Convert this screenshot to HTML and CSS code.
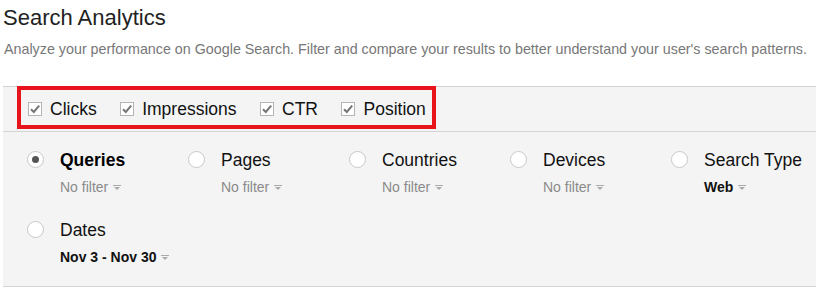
FILE: index.html
```html
<!DOCTYPE html>
<html lang="en">
<head>
<meta charset="UTF-8">
<meta name="viewport" content="width=device-width, initial-scale=1.0">
<title>Search Analytics</title>
<link rel="stylesheet" href="styles.css">
</head>
<body>
<div class="page">
    <h1 class="title">Search Analytics</h1>
    <p class="intro">Analyze your performance on Google Search. Filter and compare your results to better understand your user's search patterns.</p>

    <div class="panel">
        <div class="metrics">
            <label class="metric"><span class="check"><svg width="14" height="14" viewBox="0 0 14 14"><rect x="0.5" y="0.5" width="13" height="13" fill="#fff" stroke="#b5b5b5"/><path d="M3 7.2 L5.8 10 L11.2 3.6" fill="none" stroke="#757575" stroke-width="2"/></svg></span>Clicks</label>
            <label class="metric"><span class="check"><svg width="14" height="14" viewBox="0 0 14 14"><rect x="0.5" y="0.5" width="13" height="13" fill="#fff" stroke="#b5b5b5"/><path d="M3 7.2 L5.8 10 L11.2 3.6" fill="none" stroke="#757575" stroke-width="2"/></svg></span>Impressions</label>
            <label class="metric"><span class="check"><svg width="14" height="14" viewBox="0 0 14 14"><rect x="0.5" y="0.5" width="13" height="13" fill="#fff" stroke="#b5b5b5"/><path d="M3 7.2 L5.8 10 L11.2 3.6" fill="none" stroke="#757575" stroke-width="2"/></svg></span>CTR</label>
            <label class="metric"><span class="check"><svg width="14" height="14" viewBox="0 0 14 14"><rect x="0.5" y="0.5" width="13" height="13" fill="#fff" stroke="#b5b5b5"/><path d="M3 7.2 L5.8 10 L11.2 3.6" fill="none" stroke="#757575" stroke-width="2"/></svg></span>Position</label>
            <div class="highlight"></div>
        </div>

        <div class="filters">
            <div class="filter">
                <span class="radio checked"></span>
                <div class="filter-text">
                    <div class="filter-name bold">Queries</div>
                    <div class="filter-value">No filter <span class="caret"></span></div>
                </div>
            </div>
            <div class="filter">
                <span class="radio"></span>
                <div class="filter-text">
                    <div class="filter-name">Pages</div>
                    <div class="filter-value">No filter <span class="caret"></span></div>
                </div>
            </div>
            <div class="filter">
                <span class="radio"></span>
                <div class="filter-text">
                    <div class="filter-name">Countries</div>
                    <div class="filter-value">No filter <span class="caret"></span></div>
                </div>
            </div>
            <div class="filter">
                <span class="radio"></span>
                <div class="filter-text">
                    <div class="filter-name">Devices</div>
                    <div class="filter-value">No filter <span class="caret"></span></div>
                </div>
            </div>
            <div class="filter">
                <span class="radio"></span>
                <div class="filter-text">
                    <div class="filter-name">Search Type</div>
                    <div class="filter-value set">Web <span class="caret"></span></div>
                </div>
            </div>
            <div class="filter">
                <span class="radio"></span>
                <div class="filter-text">
                    <div class="filter-name">Dates</div>
                    <div class="filter-value set">Nov 3 - Nov 30 <span class="caret"></span></div>
                </div>
            </div>
        </div>
    </div>
</div>
</body>
</html>
```

FILE: styles.css
```css
body, html {
    margin: 0;
    padding: 0;
    height: 100%;
    overflow: hidden;
    background: #fff;
}

body {
    font-family: 'Liberation Sans', Arial, sans-serif;
    color: #222;
}

.page {
    padding-left: 3px;
}

.title {
    margin: 0;
    padding-top: 5px;
    font-size: 22px;
    font-weight: normal;
    line-height: 26px;
    color: #222;
}

.intro {
    margin: 9px 0 0 1px;
    font-size: 14.3px;
    line-height: 18px;
    color: #777;
    white-space: nowrap;
}

.panel {
    margin-top: 28px;
    background: #f4f4f4;
    border-top: 1px solid #d4d4d4;
    border-bottom: 1px solid #d4d4d4;
}

.metrics {
    position: relative;
    display: flex;
    align-items: center;
    gap: 23.5px;
    height: 44px;
    padding-left: 25px;
    border-bottom: 1px solid #d4d4d4;
}

.metric {
    display: flex;
    align-items: center;
    gap: 8px;
    font-size: 17.5px;
    color: #111;
}

.check {
    display: flex;
}

.highlight {
    position: absolute;
    left: 14px;
    top: -1px;
    width: 411px;
    height: 35px;
    border: 4px solid #e8141c;
    pointer-events: none;
}

.filters {
    display: grid;
    grid-template-columns: repeat(5, 161px);
    row-gap: 25px;
    padding: 18px 0 21px 24px;
}

.filter {
    display: flex;
    gap: 16px;
}

.radio {
    flex: none;
    position: relative;
    width: 15px;
    height: 15px;
    margin-top: 1px;
    border: 1px solid #c8c8c8;
    border-radius: 50%;
    background: #fff;
}

.radio.checked::after {
    content: "";
    position: absolute;
    left: 4px;
    top: 4px;
    width: 7px;
    height: 7px;
    border-radius: 50%;
    background: #555;
}

.filter-name {
    font-size: 17.5px;
    line-height: 20px;
    color: #111;
    white-space: nowrap;
}

.filter-name.bold {
    font-weight: bold;
    color: #000;
}

.filter-value {
    margin-top: 9px;
    font-size: 14px;
    line-height: 16px;
    color: #8a8a8a;
    white-space: nowrap;
}

.filter-value.set {
    font-weight: bold;
    color: #111;
}

.caret {
    display: inline-block;
    position: relative;
    width: 8px;
    height: 4px;
    margin-left: 1px;
    vertical-align: 2px;
    border-top: 1px solid #aaa;
}

.caret::after {
    content: "";
    position: absolute;
    left: 1px;
    top: 1px;
    border-left: 3px solid transparent;
    border-right: 3px solid transparent;
    border-top: 3px solid #aaa;
}
```
